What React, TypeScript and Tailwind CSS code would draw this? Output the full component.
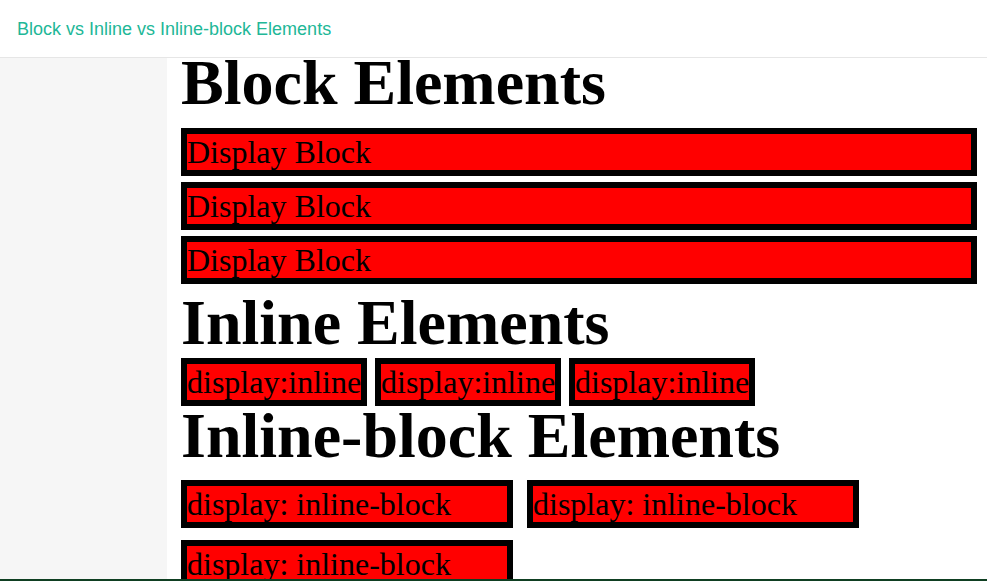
const serif = { fontFamily: '"Liberation Serif", "Times New Roman", serif' };

function Box({ label, className }: { label: string; className: string }) {
  return (
    <div
      className={`h-[48px] border-[6px] border-black bg-[#ff0000] text-[32px] leading-[36px] text-black whitespace-nowrap overflow-hidden ${className}`}
      style={serif}
    >
      {label}
    </div>
  );
}

function Heading({ children, className }: { children: string; className: string }) {
  return (
    <h1 className={`text-[64px] font-bold leading-[50px] text-black whitespace-nowrap ${className}`} style={serif}>
      {children}
    </h1>
  );
}

export default function App() {
  return (
    <div className="relative flex h-[581px] w-[987px] flex-col overflow-hidden bg-white">
      <header className="h-[58px] shrink-0 border-b border-[#e6e6e6] bg-white pl-[17px] pt-[17px]">
        <span
          className="text-[18px] leading-[19px] text-[#21b797]"
          style={{ fontFamily: '"Liberation Sans", Arial, sans-serif' }}
        >
          Block vs Inline vs Inline-block Elements
        </span>
      </header>

      <div className="flex min-h-0 flex-1">
        <aside className="w-[167px] shrink-0 bg-[#f6f6f6]" />

        <main className="flex-1 pl-[14px] pr-[10px]">
          <Heading className="mt-0">Block Elements</Heading>
          <div className="mt-[20px] flex flex-col gap-[6px]">
            <Box label="Display Block" className="w-full" />
            <Box label="Display Block" className="w-full" />
            <Box label="Display Block" className="w-full" />
          </div>

          <Heading className="mt-[14px]">Inline Elements</Heading>
          <div className="mt-[10px] flex gap-[8px]">
            <Box label="display:inline" className="w-[186px]" />
            <Box label="display:inline" className="w-[186px]" />
            <Box label="display:inline" className="w-[186px]" />
          </div>

          <Heading className="mt-[5px]">Inline-block Elements</Heading>
          <div className="mt-[19px] flex flex-wrap gap-x-[14px] gap-y-[12px]">
            <Box label="display: inline-block" className="w-[332px]" />
            <Box label="display: inline-block" className="w-[332px]" />
            <Box label="display: inline-block" className="w-[332px]" />
          </div>
        </main>
      </div>

      <div className="absolute bottom-0 left-0 h-[2px] w-full bg-[#0f3f22]" />
    </div>
  );
}
